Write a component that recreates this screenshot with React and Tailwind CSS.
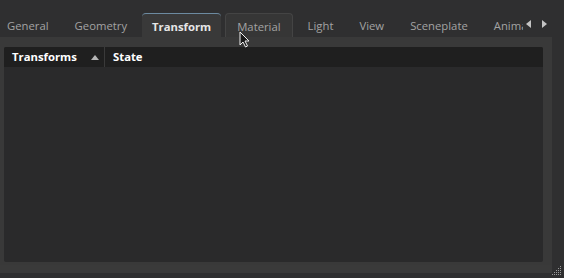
import React from "react";

const tabs = ["General", "Geometry", "Transform", "Material", "Light", "View", "Sceneplate", "Animation"];

export default function App() {
	const active = "Transform";
	const hover = "Material";

	return (
		<div
			className="relative w-[564px] h-[278px] overflow-hidden bg-[#2f2f30] text-[11.3px]"
			style={{ fontFamily: '"Open Sans", "Noto Sans", sans-serif' }}
		>
			{/* Tab bar */}
			<div className="flex h-[37px] pt-[13px] pr-[12px]">
				<div className="flex w-[523px] overflow-hidden">
					<div className="flex -ml-[6px]">
						{tabs.map((t) => (
							<div
								key={t}
								className={`shrink-0 flex items-center h-[24px] pt-[3px] ${
									t === active
										? "bg-[#393939] border-t border-[#6c8aa0] rounded-t-[4px] px-[10px] mx-[2px] font-bold text-[#e6e6e6]"
										: t === hover
										? "bg-[#363636] border-t border-l border-r border-[#444] rounded-t-[4px] px-[11px] mx-[2px] text-[#a3a3a3]"
										: "px-[13px] text-[#a3a3a3]"
								}`}
							>
								{t}
							</div>
						))}
					</div>
				</div>
				<div className="flex items-center gap-[11px] pl-[3px] h-[22px]">
					<svg width="5" height="8" viewBox="0 0 5 8">
						<path d="M5 0 L0 4 L5 8 Z" fill="#c4c4c4" />
					</svg>
					<svg width="5" height="8" viewBox="0 0 5 8">
						<path d="M0 0 L5 4 L0 8 Z" fill="#c4c4c4" />
					</svg>
				</div>
			</div>

			{/* Panel */}
			<div className="flex h-[228px] w-[552px] bg-[#393939] pt-[10px] pl-[4px] pr-[9px] pb-[3px]">
				<div className="flex flex-col flex-1 bg-[#2a2a2b] rounded-[2px] overflow-hidden">
					<div className="flex items-center h-[20px] bg-[#1f1f1f] text-white font-bold">
						<div className="flex items-center w-[101px] pl-[8px] border-r border-[#3a3a3a] h-full">
							<span className="flex-1">Transforms</span>
							<svg className="mr-[5px]" width="8" height="5" viewBox="0 0 8 5">
								<path d="M0 5 L4 0 L8 5 Z" fill="#b5b5b5" />
							</svg>
						</div>
						<div className="pl-[8px]">State</div>
					</div>
				</div>
			</div>

			<div className="h-[8px] w-[552px] bg-[#3a3a3a]"></div>

			{/* resize grip */}
			<svg className="absolute right-[2px] bottom-[2px]" width="12" height="12" viewBox="0 0 12 12">
				{[[10, 2], [8, 4], [10, 4], [6, 6], [8, 6], [10, 6], [4, 8], [6, 8], [8, 8], [10, 8], [2, 10], [4, 10], [6, 10], [8, 10], [10, 10]].map(([x, y]) => (
					<rect key={`${x}-${y}`} x={x} y={y} width="1" height="1" fill="#9a9a9a" />
				))}
			</svg>

			{/* mouse cursor */}
			<svg className="absolute left-[239px] top-[31px]" width="12" height="18" viewBox="0 0 12 18">
				<path d="M1 1 L1 14 L4 11 L6.5 16 L8.5 15 L6 10 L10 10 Z" fill="#1a1a1a" stroke="#f0f0f0" strokeWidth="1" />
			</svg>
		</div>
	);
}
